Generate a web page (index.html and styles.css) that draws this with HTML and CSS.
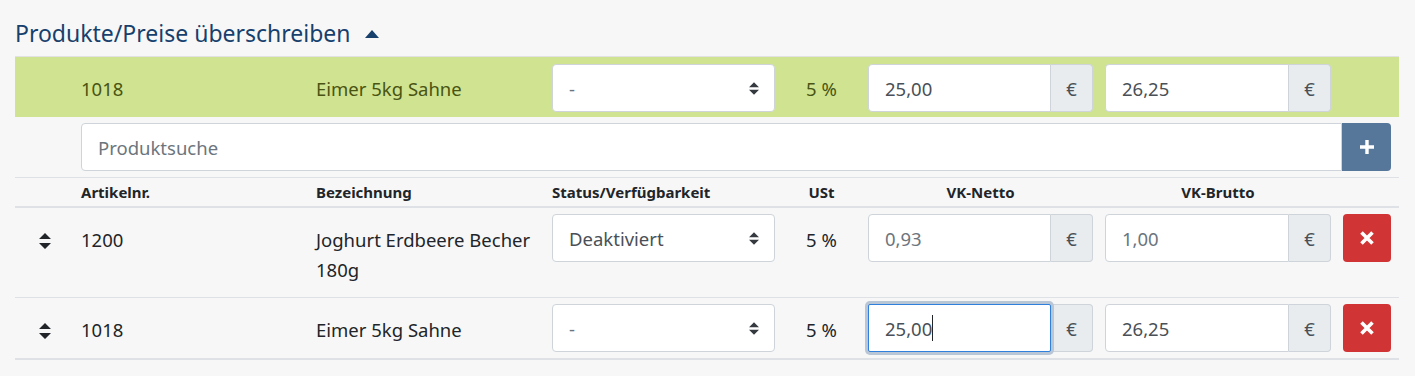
FILE: index.html
```html
<!doctype html>
<html lang="de">
  <head>
    <meta charset="UTF-8" />
    <title>Produkte/Preise überschreiben</title>
    <link rel="stylesheet" href="styles.css">
  </head>
  <body>
    <div class="container">
      <h2 class="section-title">
        Produkte/Preise überschreiben
        <svg class="caret" width="14" height="8" viewBox="0 0 14 8"><path d="M0 8 L7 0 L14 8 Z" fill="#17406d"/></svg>
      </h2>

      <table class="products">
        <colgroup>
          <col style="width:60px">
          <col style="width:235px">
          <col style="width:236px">
          <col style="width:235px">
          <col style="width:81px">
          <col style="width:237px">
          <col style="width:238px">
          <col style="width:62px">
        </colgroup>
        <tbody>
          <tr class="new-row">
            <td></td>
            <td class="txt">1018</td>
            <td class="txt">Eimer 5kg Sahne</td>
            <td class="ctl">
              <div class="fake-select"><span class="muted">-</span>
                <svg width="10" height="13" viewBox="0 0 4 5"><path d="M2 0L0 2h4zm0 5L0 3h4z" fill="#343a40"/></svg>
              </div>
            </td>
            <td class="txt center">5 %</td>
            <td class="ctl">
              <div class="input-group"><div class="field">25,00</div><div class="addon">€</div></div>
            </td>
            <td class="ctl">
              <div class="input-group"><div class="field">26,25</div><div class="addon">€</div></div>
            </td>
            <td></td>
          </tr>

          <tr class="search-row">
            <td></td>
            <td class="ctl search-cell" colspan="7">
              <div class="input-group">
                <div class="field placeholder">Produktsuche</div>
                <button class="btn-add">
                  <svg width="18" height="18" viewBox="0 0 18 18"><path d="M9 2v14M2 9h14" stroke="#fff" stroke-width="3.4"/></svg>
                </button>
              </div>
            </td>
          </tr>

          <tr class="head-row">
            <th></th>
            <th>Artikelnr.</th>
            <th>Bezeichnung</th>
            <th>Status/Verfügbarkeit</th>
            <th class="center">USt</th>
            <th class="center">VK-Netto</th>
            <th class="center">VK-Brutto</th>
            <th></th>
          </tr>

          <tr class="item">
            <td class="txt drag">
              <svg width="12" height="16" viewBox="0 0 12 16"><path d="M6 0 L12 6 H0 Z M6 16 L12 10 H0 Z" fill="#212529"/></svg>
            </td>
            <td class="txt">1200</td>
            <td class="txt">Joghurt Erdbeere Becher 180g</td>
            <td class="ctl">
              <div class="fake-select"><span>Deaktiviert</span>
                <svg width="10" height="13" viewBox="0 0 4 5"><path d="M2 0L0 2h4zm0 5L0 3h4z" fill="#343a40"/></svg>
              </div>
            </td>
            <td class="txt center">5 %</td>
            <td class="ctl">
              <div class="input-group"><div class="field muted">0,93</div><div class="addon">€</div></div>
            </td>
            <td class="ctl">
              <div class="input-group"><div class="field muted">1,00</div><div class="addon">€</div></div>
            </td>
            <td class="ctl">
              <button class="btn-del">
                <svg width="16" height="16" viewBox="0 0 16 16"><path d="M2.5 2.5L13.5 13.5M13.5 2.5L2.5 13.5" stroke="#fff" stroke-width="3.6"/></svg>
              </button>
            </td>
          </tr>

          <tr class="item last">
            <td class="txt drag">
              <svg width="12" height="16" viewBox="0 0 12 16"><path d="M6 0 L12 6 H0 Z M6 16 L12 10 H0 Z" fill="#212529"/></svg>
            </td>
            <td class="txt">1018</td>
            <td class="txt">Eimer 5kg Sahne</td>
            <td class="ctl">
              <div class="fake-select"><span class="muted">-</span>
                <svg width="10" height="13" viewBox="0 0 4 5"><path d="M2 0L0 2h4zm0 5L0 3h4z" fill="#343a40"/></svg>
              </div>
            </td>
            <td class="txt center">5 %</td>
            <td class="ctl">
              <div class="input-group"><div class="field focused">25,00<span class="cursor"></span></div><div class="addon">€</div></div>
            </td>
            <td class="ctl">
              <div class="input-group"><div class="field">26,25</div><div class="addon">€</div></div>
            </td>
            <td class="ctl">
              <button class="btn-del">
                <svg width="16" height="16" viewBox="0 0 16 16"><path d="M2.5 2.5L13.5 13.5M13.5 2.5L2.5 13.5" stroke="#fff" stroke-width="3.6"/></svg>
              </button>
            </td>
          </tr>
        </tbody>
      </table>
    </div>
  </body>
</html>
```

FILE: styles.css
```css
body {
  margin: 0;
  background-color: #f7f7f7;
  font-family: "Noto Sans", "Open Sans", sans-serif;
  font-size: 18.5px;
  color: #212529;
}
.container {
  padding: 0 16px 0 15px;
}
.section-title {
  margin: 0;
  padding-top: 19px;
  height: 56px;
  box-sizing: border-box;
  font-size: 23px;
  font-weight: normal;
  line-height: 28px;
  color: #17406d;
}
.caret {
  margin-left: 8px;
  vertical-align: 4px;
}
.products {
  width: 1384px;
  table-layout: fixed;
  border-collapse: collapse;
  border-top: 1px solid #e2e2e2;
}
.products td,
.products th {
  padding: 0;
  vertical-align: top;
}
.txt {
  padding: 17px 6px 12px !important;
  line-height: 30px;
}
.ctl {
  padding: 6px !important;
}
.center {
  text-align: center;
}
.new-row {
  background-color: #cfe391;
  color: #4a5412;
}
.new-row .ctl {
  padding: 7px 6px 5px !important;
}
.search-row {
  border-bottom: 1px solid #dee2e6;
}
.search-cell {
  padding-right: 8px !important;
}
.head-row th {
  padding: 4px 6px;
  font-size: 15px;
  line-height: 20px;
  font-weight: bold;
  text-align: left;
  border-bottom: 2px solid #dee2e6;
}
.head-row th.center {
  text-align: center;
}
.item {
  border-bottom: 1px solid #dee2e6;
}
.item.last {
  border-bottom-width: 2px;
}
.drag {
  padding-left: 24px !important;
  text-align: left;
}
.drag svg {
  vertical-align: -2px;
}

.fake-select,
.field {
  height: 48px;
  box-sizing: border-box;
  background: #fff;
  border: 1px solid #ced4da;
  border-radius: 4px;
  color: #495057;
  font-size: 18.5px;
}
.fake-select {
  display: flex;
  align-items: center;
  justify-content: space-between;
  padding: 0 15px 0 16px;
}
.input-group {
  display: flex;
  height: 48px;
}
.field {
  flex: 1;
  display: flex;
  align-items: center;
  padding: 0 16px;
  border-radius: 4px 0 0 4px;
}
.muted {
  color: #6c757d;
}
.placeholder {
  color: #6c757d;
}
.addon {
  width: 41px;
  display: flex;
  align-items: center;
  justify-content: center;
  background-color: #e9ecef;
  border: 1px solid #ced4da;
  border-left: none;
  border-radius: 0 4px 4px 0;
  color: #495057;
  font-size: 18.5px;
}
.focused {
  border-color: #2f7fdc;
  box-shadow: 0 0 0 3px #b9c6d5;
  position: relative;
  z-index: 1;
  border-radius: 2px;
}
.cursor {
  display: inline-block;
  width: 1px;
  height: 26px;
  background: #212529;
}
.btn-add {
  width: 49px;
  border: none;
  background-color: #56779a;
  border-radius: 0 4px 4px 0;
  display: flex;
  align-items: center;
  justify-content: center;
  padding: 0;
}
.btn-del {
  width: 48px;
  height: 48px;
  border: none;
  border-radius: 4px;
  background-color: #d03434;
  display: flex;
  align-items: center;
  justify-content: center;
  padding: 0;
}
```
